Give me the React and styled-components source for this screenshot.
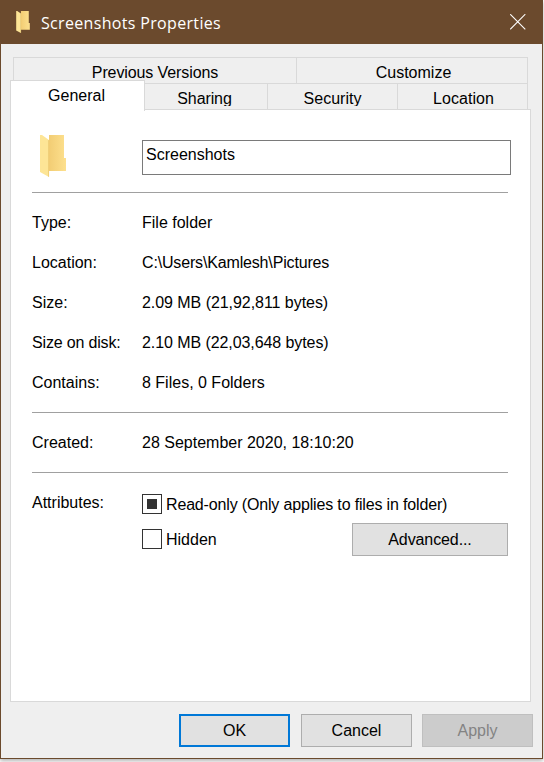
import React from 'react';
import styled, { createGlobalStyle } from 'styled-components';

const Global = createGlobalStyle`
  html, body { margin: 0; padding: 0; background: #fff; }
  body { font-family: "Liberation Sans", Arial, sans-serif; font-size: 16px; color: #000; }
`;
const Page = styled.div`
  width: 544px; height: 762px; overflow: hidden; box-sizing: border-box;
`;
const Win = styled.div`
  width: 543px; height: 759px; box-sizing: border-box;
  border: 1px solid #6b4a2d; border-top: none;
  background: #efefef; display: flex; flex-direction: column;
  box-shadow: 0 2px 4px rgba(0,0,0,.3);
`;
const TitleBar = styled.div`
  height: 44px; background: #6b4a2d; display: flex; align-items: center;
  padding: 0 16px 0 15px; flex: none; color: #fff;
`;
const TitleText = styled.div`
  font-family: "Open Sans", sans-serif; font-size: 16px; margin-left: 11px; flex: 1;
  letter-spacing: 0.33px; padding-top: 1px;
`;
const Tabs = styled.div`
  margin: 13px 0 0 9px; display: flex; flex-direction: column; flex: none;
`;
const Tab = styled.div`
  width: ${p => p.$w}px; box-sizing: border-box; flex: none;
  border: 1px solid #d9d9d9; border-bottom: none; border-left-width: ${p => p.$first ? 1 : 0}px;
  background: #efefef; text-align: center; overflow: hidden; height: 26px;
  line-height: 29px; letter-spacing: ${p => p.$ls || 0}px;
  padding-left: ${p => p.$pl || 0}px; padding-right: ${p => p.$pr || 0}px;
`;
const TabClip = styled.div`
  height: 22px; overflow: hidden;
`;
const ActiveTab = styled.div`
  width: 135px; margin-top: -3px; box-sizing: border-box; flex: none;
  border: 1px solid #d9d9d9; border-bottom: none; background: #fff;
  text-align: center; line-height: 30px; position: relative; z-index: 2; margin-bottom: -1px;
  height: 31px; padding-right: 2px;
`;
const SecondRow = styled.div`
  display: flex; height: 26px;
`;
const RowOne = styled.div`
  display: flex; height: 26px; padding-left: 3px;
`;
const Panel = styled.div`
  margin: 0 0 0 9px; width: 521px; height: 593px; box-sizing: border-box; flex: none;
  border: 1px solid #d9d9d9; background: #fff; padding: 25px 20px 0 21px;
`;
const Head = styled.div`
  display: flex; height: 57px; align-items: flex-start;
`;
const IconSlot = styled.div`
  width: 110px; flex: none; display: flex; padding-left: 8px; box-sizing: border-box;
`;
const NameBox = styled.div`
  width: 369px; height: 35px; box-sizing: border-box; border: 1px solid #7a7a7a; margin-top: 5px;
  padding-left: 3px; line-height: 27px; flex: none;
`;
const Rule = styled.div`
  height: 1px; background: #a0a0a0; width: 476px;
`;
const Rows = styled.div`
  padding-top: 10px; padding-bottom: 9px;
`;
const Row = styled.div`
  display: grid; grid-template-columns: 110px 1fr; height: 40px; align-items: center;
`;
const Cell = styled.span`
  letter-spacing: ${p => p.$ls || 0}px;
`;
const Attr = styled.div`
  display: grid; grid-template-columns: 110px 1fr; padding-top: 21px; width: 476px;
`;
const AttrLabel = styled.div`
  line-height: 18px;
`;
const AttrCol = styled.div`
  display: flex; flex-direction: column;
`;
const CheckRow = styled.div`
  display: flex; align-items: center; height: ${p => p.$h}px;
`;
const Box = styled.div`
  width: 20px; height: 20px; box-sizing: border-box; border: 1px solid #333;
  display: flex; align-items: center; justify-content: center; flex: none; margin-right: 4px;
`;
const Mark = styled.div`
  width: 10px; height: 10px; background: #333;
`;
const CheckText = styled.div`
  flex: 1; letter-spacing: ${p => p.$ls || 0}px; padding-top: 2px;
`;
const Button = styled.div`
  box-sizing: border-box; width: ${p => p.$w}px; height: 33px; flex: none;
  display: flex; align-items: center; justify-content: center;
  margin-right: ${p => p.$mr || 0}px;
  padding-top: ${p => p.$pt || 0}px;
  letter-spacing: ${p => p.$ls || 0}px;
  background: ${p => p.$disabled ? '#cccccc' : '#e1e1e1'};
  color: ${p => p.$disabled ? '#838383' : '#000'};
  border: ${p => p.$focus ? '2px solid #0078d7' : p.$disabled ? '1px solid #bfbfbf' : '1px solid #adadad'};
`;
const Footer = styled.div`
  display: flex; justify-content: flex-end; gap: 10px; padding: 12px 9px 0 0; flex: 1;
`;

const CloseIcon = () => (
  <svg width="16" height="16" viewBox="0 0 16 16" fill="none" stroke="#fff" strokeWidth="1.1" style={{ display: 'block' }}>
    <path d="M0.2 0.2 15.3 15.3M15.3 0.2 0.2 15.3" />
  </svg>
);
const FolderIcon = ({ w, h, id }) => (
  <svg width={w} height={h} viewBox="0 0 26 42" style={{ display: 'block' }}>
    <defs>
      <linearGradient id={id} x1="0" x2="1" y1="0" y2="0">
        <stop offset="0" stopColor="#f2cd74" /><stop offset="1" stopColor="#fde08e" />
      </linearGradient>
    </defs>
    <path d="M9 0H24V23H26V36H9Z" fill={`url(#${id})`} />
    <path d="M0 0H2L9 5V42L0 37Z" fill="#fde596" />
    <path d="M8.6 5.2V41.7" stroke="#eac76f" strokeWidth=".8" />
  </svg>
);

const info = [
  ['Type:', 'File folder', 0, 0],
  ['Location:', 'C:\\Users\\Kamlesh\\Pictures', 0, -0.16],
  ['Size:', '2.09 MB (21,92,811 bytes)', 0, -0.05],
  ['Size on disk:', '2.10 MB (22,03,648 bytes)', -0.17, -0.08],
  ['Contains:', '8 Files, 0 Folders', 0, 0],
];

export default function App() {
  return (
    <Page>
      <Global />
      <Win>
        <TitleBar>
          <FolderIcon w={14} h={22} id="small" />
          <TitleText>Screenshots Properties</TitleText>
          <CloseIcon />
        </TitleBar>
        <Tabs>
          <RowOne>
            <Tab $first $w={284} $ls={-0.1}>Previous Versions</Tab>
            <Tab $w={231} $pl={3}>Customize</Tab>
          </RowOne>
          <SecondRow>
            <ActiveTab>General</ActiveTab>
            <Tab $w={123} $ls={-0.1} $pr={3}><TabClip>Sharing</TabClip></Tab>
            <Tab $w={130}><TabClip>Security</TabClip></Tab>
            <Tab $w={130} $pl={2} $ls={0.05}><TabClip>Location</TabClip></Tab>
          </SecondRow>
        </Tabs>
        <Panel>
          <Head>
            <IconSlot><FolderIcon w={26} h={42} id="large" /></IconSlot>
            <NameBox>Screenshots</NameBox>
          </Head>
          <Rule />
          <Rows>
            {info.map(([k, v, kls, vls]) => (
              <Row key={k}><Cell $ls={kls}>{k}</Cell><Cell $ls={vls}>{v}</Cell></Row>
            ))}
          </Rows>
          <Rule />
          <Rows>
            <Row><Cell>Created:</Cell><Cell>28 September 2020, 18:10:20</Cell></Row>
          </Rows>
          <Rule />
          <Attr>
            <AttrLabel>Attributes:</AttrLabel>
            <AttrCol>
              <CheckRow $h={20}><Box><Mark /></Box><CheckText $ls={-0.16}>Read-only (Only applies to files in folder)</CheckText></CheckRow>
              <CheckRow $h={50}>
                <Box />
                <CheckText>Hidden</CheckText>
                <Button $w={156} $ls={-0.1} $pt={2}>Advanced...</Button>
              </CheckRow>
            </AttrCol>
          </Attr>
        </Panel>
        <Footer>
          <Button $w={111} $focus $mr={1}>OK</Button>
          <Button $w={111}>Cancel</Button>
          <Button $w={111} $disabled>Apply</Button>
        </Footer>
      </Win>
    </Page>
  );
}
